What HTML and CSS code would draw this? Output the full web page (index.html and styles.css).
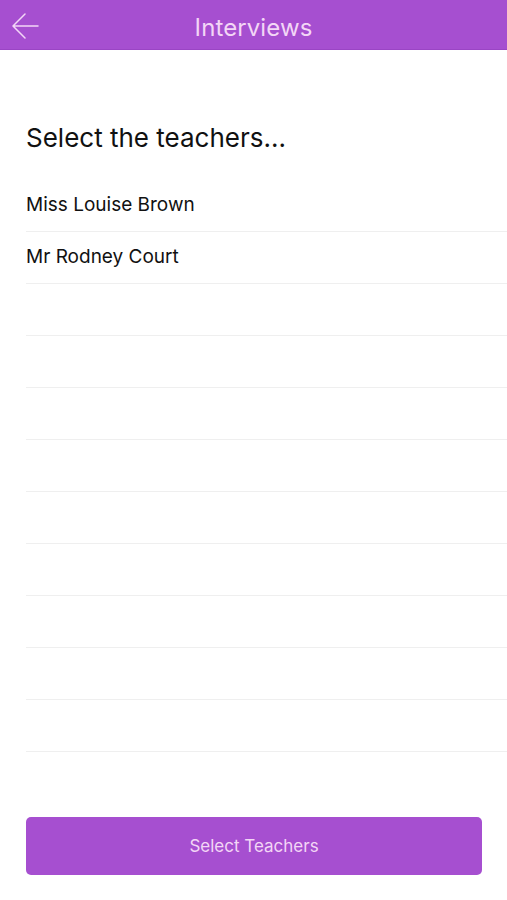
FILE: index.html
```html
<!DOCTYPE html>
<html>
  <head>
    <title>Interviews</title>

    <link rel="stylesheet" href="styles.css">
  </head>
  <body>
    <div class="app">
      <div class="nav-bar">
        <a class="back-button" href="#">
          <svg width="28" height="28" viewBox="0 0 28 28">
            <path d="M26 13 H2 M13 1 L1 13 L13 25" fill="none" stroke="#f3d6f6" stroke-width="1.5" stroke-linecap="round" stroke-linejoin="round" />
          </svg>
        </a>
        <h1 class="nav-title">Interviews</h1>
      </div>

      <div class="content">
        <h2 class="prompt">Select the teachers...</h2>
        <ul class="teacher-list">
          <li class="teacher-row">Miss Louise Brown</li>
          <li class="teacher-row">Mr Rodney Court</li>
          <li class="teacher-row"></li>
          <li class="teacher-row"></li>
          <li class="teacher-row"></li>
          <li class="teacher-row"></li>
          <li class="teacher-row"></li>
          <li class="teacher-row"></li>
          <li class="teacher-row"></li>
          <li class="teacher-row"></li>
          <li class="teacher-row"></li>
        </ul>
      </div>

      <div class="footer">
        <button type="button" class="select-button">Select Teachers</button>
      </div>
    </div>
  </body>
</html>
```

FILE: styles.css
```css
body {
  font-family: Inter, "Noto Sans", sans-serif;
  background-color: #fff;
  margin: 0;
  padding: 0;
}

.app {
  display: flex;
  flex-direction: column;
  height: 900px;
}

.nav-bar {
  position: relative;
  display: flex;
  align-items: center;
  justify-content: center;
  box-sizing: border-box;
  height: 50px;
  padding-top: 5px;
  background-color: #a64fd0;
  border-bottom: 1px solid #9a45c4;
}

.back-button {
  position: absolute;
  left: 12px;
  top: 13px;
  width: 28px;
  height: 28px;
}

.nav-title {
  margin: 0;
  font-size: 24px;
  font-weight: 400;
  color: #f3d6f6;
  letter-spacing: 0.1px;
}

.content {
  flex: 1;
  padding-left: 26px;
}

.prompt {
  margin: 72px 0 26px 0;
  font-size: 26px;
  font-weight: 400;
  color: #111;
  line-height: 32px;
}

.teacher-list {
  list-style: none;
  margin: 0;
  padding: 0;
}

.teacher-row {
  height: 51px;
  line-height: 50px;
  border-bottom: 1px solid #efefef;
  font-size: 19px;
  color: #111;
}

.footer {
  padding: 0 25px 25px 26px;
}

.select-button {
  width: 100%;
  height: 58px;
  background-color: #a64fd0;
  color: #f3d6f6;
  border: none;
  border-radius: 5px;
  font-family: Inter, "Noto Sans", sans-serif;
  font-size: 17px;
  cursor: pointer;
}
```
